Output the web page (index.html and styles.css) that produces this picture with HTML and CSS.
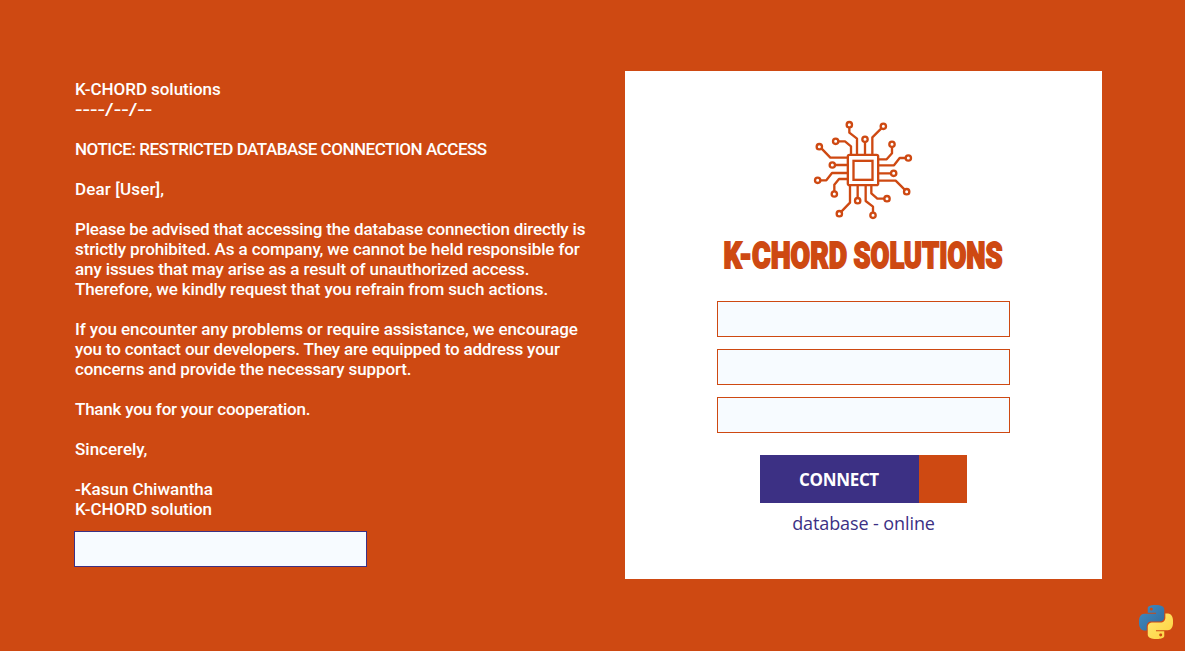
FILE: index.html
```html
<!DOCTYPE html>
<html lang="en">
<head>
<meta charset="utf-8">
<title>K-CHORD Solutions</title>
<link rel="stylesheet" href="styles.css">
</head>
<body>
<main class="page">
  <section class="notice">
    <div class="letter">
      <p><span class="fit-xs">K-CHORD solutions</span><br><span class="date">----/--/--</span></p>
      <p><span class="caps">NOTICE: RESTRICTED DATABASE CONNECTION ACCESS</span></p>
      <p><span class="greeting">Dear [User],</span></p>
      <p><span class="fit-l">Please be advised that accessing the database connection directly is</span><br><span class="fit-m">strictly prohibited. As a company, we cannot be held responsible for</span><br><span class="fit-m">any issues that may arise as a result of unauthorized access.</span><br><span class="fit-m">Therefore, we kindly request that you refrain from such actions.</span></p>
      <p><span class="fit-s">If you encounter any problems or require assistance, we encourage</span><br><span class="fit-l">you to contact our developers. They are equipped to address your</span><br><span class="fit-m">concerns and provide the necessary support.</span></p>
      <p><span class="fit-xl">Thank you for your cooperation.</span></p>
      <p><span>Sincerely,</span></p>
      <p><span>-Kasun Chiwantha</span><br><span class="fit-xs">K-CHORD solution</span></p>
    </div>
    <input class="field field-notice" type="text" aria-label="Acknowledgement">
  </section>
  <section class="card">
    <svg class="chip" viewBox="0 0 360 360" aria-hidden="true">
      <g fill="none" stroke="#ce4912" stroke-width="7" stroke-linejoin="round">
        <rect x="134.500" y="134.500" width="91" height="91" rx="5"/>
        <rect x="151.500" y="152.500" width="57" height="57" stroke-linejoin="miter"/>
        <path d="M139 52V68L162 86V133M107 94H126L144 109V133M186 97V133M235 55L208 82V133M56 116L82 143H133M97 165H133M53 211H70L87 189H133M94 243V224L108 207H133M227 148H251L267 130V112M227 166H273L290 144H307M227 190H263M227 212H278L305 239M115 305L141 278V227M164 227V263M188 227V273L210 290V307M205 227V250L223 266H243"/>
        <circle cx="139" cy="44" r="8"/><circle cx="98" cy="94" r="8"/><circle cx="186" cy="88" r="8"/><circle cx="241" cy="49" r="8"/>
        <circle cx="49" cy="110" r="8"/><circle cx="88" cy="165" r="8"/><circle cx="44" cy="211" r="8"/><circle cx="94" cy="252" r="8"/>
        <circle cx="267" cy="103" r="8"/><circle cx="316" cy="144" r="8"/><circle cx="272" cy="190" r="8"/><circle cx="311" cy="245" r="8"/>
        <circle cx="109" cy="311" r="8"/><circle cx="164" cy="272" r="8"/><circle cx="210" cy="316" r="8"/><circle cx="252" cy="266" r="8"/>
      </g>
    </svg>
    <svg class="brand" viewBox="0 0 300 60" role="img" aria-label="K-CHORD SOLUTIONS">
      <text x="9.500" y="41" textLength="123.500" lengthAdjust="spacingAndGlyphs">K-CHORD</text>
      <text x="139.500" y="41" textLength="149" lengthAdjust="spacingAndGlyphs">SOLUTIONS</text>
    </svg>
    <form class="form">
      <input class="field" type="text" aria-label="Host">
      <input class="field" type="text" aria-label="User">
      <input class="field" type="password" aria-label="Password">
    </form>
    <div class="actions">
      <button class="connect" type="button">CONNECT</button>
      <div class="indicator"></div>
    </div>
    <div class="status">database - online</div>
  </section>
  <svg class="python" viewBox="0 0 24 24" aria-hidden="true">
    <defs>
      <linearGradient id="blue" x1="0" y1="0" x2="1" y2="1"><stop offset="0" stop-color="#3f8cc5"/><stop offset="1" stop-color="#326998"/></linearGradient>
      <linearGradient id="gold" x1="1" y1="1" x2="0" y2="0"><stop offset="0" stop-color="#ffe873"/><stop offset="1" stop-color="#ffd23c"/></linearGradient>
      <path id="snake" d="M14.25.18l.9.2.73.26.59.3.45.32.34.34.25.34.16.33.1.3.04.26.02.2-.01.13V8.500l-.05.63-.13.55-.21.46-.26.38-.3.31-.33.25-.35.19-.35.14-.33.1-.3.07-.26.04-.21.02H8.770l-.69.05-.59.14-.5.22-.41.27-.33.32-.27.35-.2.36-.15.37-.1.35-.07.32-.04.27-.02.21v3.060H3.170l-.21-.03-.28-.07-.32-.12-.35-.18-.36-.26-.36-.36-.35-.46-.32-.59-.28-.73-.21-.88-.14-1.050-.05-1.230.06-1.220.16-1.040.24-.87.32-.71.36-.57.4-.44.42-.33.42-.24.4-.16.36-.1.32-.05.24-.01h.16l.06.01h8.160v-.83H6.180l-.01-2.750-.02-.37.05-.34.11-.31.17-.28.25-.26.31-.23.38-.2.44-.18.51-.15.58-.12.64-.1.71-.06.77-.04.84-.02 1.270.05zm-6.300 1.980l-.23.33-.08.41.08.41.23.34.33.22.41.09.41-.09.33-.22.23-.34.08-.41-.08-.41-.23-.33-.33-.22-.41-.09-.41.09z"/>
    </defs>
    <use href="#snake" fill="url(#blue)"/>
    <use href="#snake" fill="url(#gold)" transform="rotate(180 12 12)"/>
  </svg>
</main>
</body>
</html>
```
FILE: styles.css
```css
* { box-sizing: border-box; }
body { margin: 0; background: #ce4912; }
.page {
  position: relative;
  display: flex;
  justify-content: space-between;
  width: 1185px;
  height: 651px;
  padding: 71px 83px 0 74px;
  overflow: hidden;
  background: #ce4912;
}
.notice { width: 530px; padding: 8px 0 0; }
.letter {
  height: 452px;
  padding-left: 1px;
  color: #fff;
  font: 500 17px/20px Roboto, sans-serif;
  white-space: nowrap;
}
.letter p { margin: 0 0 20px; }
.date { display: inline-block; transform: scaleX(1.3); transform-origin: 0 50%; }
.caps { letter-spacing: -0.47px; }
.greeting { letter-spacing: 0.15px; }
.fit-xs { letter-spacing: -0.06px; }
.fit-s { letter-spacing: -0.08px; }
.fit-m { letter-spacing: -0.12px; }
.fit-l { letter-spacing: -0.17px; }
.fit-xl { letter-spacing: -0.22px; }
.field {
  display: block;
  width: 293px;
  height: 36px;
  padding: 0 8px;
  border: 1px solid #ce4912;
  border-radius: 0;
  outline: 0;
  background: #f7fbff;
}
.field-notice { border-color: #3c3084; }
.card {
  display: flex;
  flex-direction: column;
  align-items: center;
  width: 477px;
  height: 508px;
  padding-top: 39px;
  background: #fff;
}
.chip { width: 120px; height: 120px; flex: none; margin-right: 1px; }
.brand { width: 300px; height: 60px; margin: -3px 0 -7px; flex: none; overflow: visible; }
.brand text {
  font: 900 36px Roboto, sans-serif;
  fill: #ce4912;
  stroke: #ce4912;
  stroke-width: 1.8px;
}
.form { display: grid; gap: 12px; margin-top: 21px; }
.actions { display: flex; margin-top: 22px; }
.connect {
  width: 159px;
  height: 48px;
  padding: 1px 1px 0 0;
  border: 0;
  background: #3c3084;
  color: #fff;
  font: 700 17px "Open Sans", sans-serif;
  letter-spacing: -0.35px;
}
.indicator { width: 48px; height: 48px; background: #ce4912; }
.status {
  margin-top: 7px;
  color: #3c3084;
  font: 400 18px/26px "Open Sans", sans-serif;
  letter-spacing: -0.1px;
}
.python { position: absolute; left: 1139px; top: 605px; width: 34px; height: 34px; }
```
